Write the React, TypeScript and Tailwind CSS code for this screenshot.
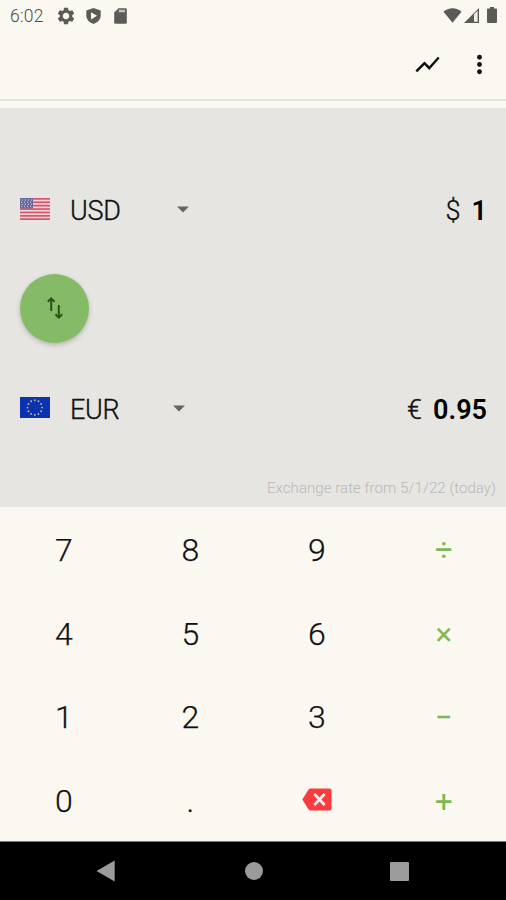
import type { ReactNode } from "react"

type Key = { label: string; content?: ReactNode; operator?: boolean }

function UsFlag() {
  return (
    <svg className="mb-px h-[22px] w-[30px]" viewBox="0 0 30 22">
      <rect width="30" height="22" fill="#f3d3d8" />
      {[0, 3.4, 6.8, 10.2, 13.6, 17, 20.3].map((y) => (
        <rect key={y} y={y} width="30" height="1.7" fill="#d4566b" />
      ))}
      <rect width="13" height="10.5" fill="#66699c" />
      {[2, 4.2, 6.4, 8.6].map((y, row) =>
        [2, 5, 8, 11].map((x) => (
          <circle key={`${x}-${y}`} cx={row % 2 ? x - 0.4 : x + 0.3} cy={y} r="0.65" fill="#c9cbe0" />
        )),
      )}
    </svg>
  )
}

function EuFlag() {
  return (
    <svg className="mb-px h-[21px] w-[30px]" viewBox="0 0 30 21">
      <rect width="30" height="21" fill="#0b32b0" />
      {Array.from({ length: 12 }, (_, i) => (
        <circle
          key={i}
          cx={14.8 + 7.3 * Math.sin((i * Math.PI) / 6)}
          cy={10.6 - 7.3 * Math.cos((i * Math.PI) / 6)}
          r="0.95"
          fill="#c3bd78"
        />
      ))}
    </svg>
  )
}

function StatusBar() {
  return (
    <div className="flex h-8 items-center justify-between pr-[8px] pl-[10px] text-[#5c5b58]">
      <div className="flex items-center">
        <span className="w-[46px] text-[17.5px] leading-8 font-light tracking-[0.2px] text-[#4d4c49]">6:02</span>
        <svg className="h-5 w-5" viewBox="0 0 24 24" fill="currentColor">
          <path d="M19.43 12.98c.04-.32.07-.64.07-.98s-.03-.66-.07-.98l2.11-1.65c.19-.15.24-.42.12-.64l-2-3.46c-.12-.22-.39-.3-.61-.22l-2.49 1c-.52-.4-1.08-.73-1.69-.98l-.38-2.65C14.46 2.18 14.25 2 14 2h-4c-.25 0-.46.18-.49.42l-.38 2.65c-.61.25-1.17.59-1.69.98l-2.49-1c-.23-.09-.49 0-.61.22l-2 3.46c-.13.22-.07.49.12.64l2.11 1.65c-.04.32-.07.65-.07.98s.03.66.07.98l-2.11 1.65c-.19.15-.24.42-.12.64l2 3.46c.12.22.39.3.61.22l2.49-1c.52.4 1.08.73 1.69.98l.38 2.65c.03.24.24.42.49.42h4c.25 0 .46-.18.49-.42l.38-2.65c.61-.25 1.17-.59 1.69-.98l2.49 1c.23.09.49 0 .61-.22l2-3.46c.12-.22.07-.49-.12-.64l-2.11-1.65zM12 15.9c-2.15 0-3.9-1.75-3.9-3.9s1.75-3.9 3.9-3.9 3.9 1.75 3.9 3.9-1.75 3.9-3.9 3.9z" />
        </svg>
        <svg className="ml-[10px] h-4 w-[15px]" viewBox="0 0 15 16">
          <path d="M7.5 0L14.7 2.6V7.6C14.7 11.5 11.7 14.7 7.5 16C3.3 14.7 .3 11.5 .3 7.6V2.6Z" fill="currentColor" />
          <path d="M5 4.2L11 7.8L5 11.4Z" fill="#fbf8f1" />
        </svg>
        <svg className="ml-[13px] h-4 w-[13px]" viewBox="0 0 13 16">
          <path d="M4.5 .3H11.5Q12.8 .3 12.8 1.6V14.4Q12.8 15.7 11.5 15.7H1.5Q.2 15.7 .2 14.4V4.6Z" fill="currentColor" />
          <path d="M5 1.8H11V4.3H4.6Z" fill="#c5c3be" />
        </svg>
      </div>
      <div className="flex items-center pb-[2px]">
        <svg className="h-[15px] w-[19px]" viewBox="0 0 19 15" fill="currentColor">
          <path d="M9.5 14.7L.5 3.7C3 1.5 6 .3 9.5 .3S16 1.5 18.5 3.7Z" />
        </svg>
        <svg className="ml-[2px] h-[15px] w-[15px]" viewBox="0 0 15 15">
          <path d="M0 15L15 0V15Z" fill="currentColor" />
          <path d="M10 6.2L13.6 2.8V13.7H10Z" fill="#f3f0e9" />
        </svg>
        <svg className="mr-px ml-[8px] h-4 w-[10px]" viewBox="0 0 10 16" fill="currentColor">
          <path d="M3 0H7V1.6H9Q10 1.6 10 2.6V15Q10 16 9 16H1Q0 16 0 15V2.6Q0 1.6 1 1.6H3Z" />
        </svg>
      </div>
    </div>
  )
}

function Toolbar() {
  return (
    <div className="flex h-[67px] items-center justify-end pr-[12px] pb-[3px] text-[#111]">
      <button className="mr-[23px]" aria-label="Chart">
        <svg className="h-[29px] w-[29px]" viewBox="0 0 24 24" fill="currentColor">
          <path d="M3.5 18.49l6-6.01 4 4L22 6.92l-1.41-1.41-7.09 7.97-4-4L2 16.99z" />
        </svg>
      </button>
      <button aria-label="More">
        <svg className="h-[29px] w-[29px]" viewBox="0 0 24 24" fill="currentColor">
          <circle cx="12" cy="6" r="2" />
          <circle cx="12" cy="12" r="2" />
          <circle cx="12" cy="18" r="2" />
        </svg>
      </button>
    </div>
  )
}

type CurrencyRowProps = {
  flag: ReactNode
  code: string
  symbol: string
  amount: string
  codeWidth: string
}

function CurrencyRow({ flag, code, symbol, amount, codeWidth }: CurrencyRowProps) {
  return (
    <div className="flex h-[60px] items-center pr-[19px] pl-5 text-[27px] text-[#111]">
      {flag}
      <span className={`ml-[20px] pt-[4px] font-light tracking-[-0.3px] [-webkit-text-stroke:0.35px] ${codeWidth}`}>
        {code}
      </span>
      <svg className="h-[7px] w-3" viewBox="0 0 12 7">
        <path d="M0 .5H12L6 6.5Z" fill="#666562" />
      </svg>
      <span className="ml-auto pt-[4px] font-light [-webkit-text-stroke:0.35px]">{symbol}</span>
      <span className="ml-[11px] pt-[4px] font-semibold text-black">{amount}</span>
    </div>
  )
}

const keys: Key[] = [
  { label: "7" },
  { label: "8" },
  { label: "9" },
  { label: "÷", operator: true },
  { label: "4" },
  { label: "5" },
  { label: "6" },
  { label: "×", operator: true },
  { label: "1" },
  { label: "2" },
  { label: "3" },
  { label: "−", operator: true },
  { label: "0" },
  { label: "." },
  {
    label: "Delete",
    content: (
      <svg className="mb-[3px] ml-px h-[23px] w-[30px]" viewBox="0 0 30 23">
        <path d="M8.5 .5H27.5Q29.5 .5 29.5 2.5V20.5Q29.5 22.5 27.5 22.5H8.5Q7.3 22.5 6.6 21.5L.3 11.5L6.6 1.5Q7.3 .5 8.5 .5Z" fill="#fb3b3e" />
        <path d="M12.3 6L22.7 17M22.7 6L12.3 17" stroke="#fff5ef" strokeWidth="2.6" />
      </svg>
    ),
  },
  { label: "+", operator: true },
]

function Keypad() {
  return (
    <div className="grid h-[334px] grid-cols-4 grid-rows-4">
      {keys.map((key) => (
        <button
          key={key.label}
          aria-label={key.label}
          className={
            key.operator
              ? "flex items-center justify-center pt-[5px] pl-[2px] text-[31px] text-[#7cb956]"
              : "flex items-center justify-center pt-[3px] pl-px text-[32px] font-light text-[#111] [-webkit-text-stroke:0.25px]"
          }
        >
          {key.content ?? key.label}
        </button>
      ))}
    </div>
  )
}

function NavigationBar() {
  return (
    <div className="flex h-[59px] items-center border-t border-[#777] bg-black pl-[96px]">
      <svg className="h-[22px] w-[19px]" viewBox="0 0 19 22">
        <path d="M.5 11L18.7 .5V21.5Z" fill="#9b9b9b" />
      </svg>
      <div className="ml-[130px] h-[18px] w-[18px] rounded-full bg-[#9b9b9b]" />
      <div className="ml-[127px] h-[19px] w-[19px] rounded-[1px] bg-[#9b9b9b]" />
    </div>
  )
}

export default function App() {
  return (
    <div className="flex h-[900px] w-[506px] flex-col overflow-hidden bg-[#fbf8f1] font-['Roboto',sans-serif]">
      <StatusBar />
      <Toolbar />
      <div className="h-[9px] border-t-2 border-[#e6e3dd]" />
      <main className="flex h-[399px] flex-col bg-[#e6e5e1] pt-[71px]">
        <CurrencyRow flag={<UsFlag />} code="USD" symbol="$" amount="1" codeWidth="w-[107px]" />
        <button
          aria-label="Swap currencies"
          className="my-[35px] ml-5 flex h-[69px] w-[69px] items-center justify-center rounded-full bg-[#85ba67] pb-px shadow-[0_2px_5px_rgba(0,0,0,0.22)]"
        >
          <svg className="h-[22px] w-4" viewBox="0 0 16 22" fill="none" stroke="#2d5218" strokeWidth="2">
            <path d="M4.2 14V1.5M.8 4.8L4.2 1.4L7.6 4.8M11.8 8V20.5M8.4 17.2L11.8 20.6L15.2 17.2" />
          </svg>
        </button>
        <CurrencyRow flag={<EuFlag />} code="EUR" symbol="€" amount="0.95" codeWidth="w-[103px]" />
        <p className="mt-auto pr-[10px] pb-[8px] text-right text-[15px] leading-[22px] font-light tracking-[0.06px] text-[#b9b8b5]">
          Exchange rate from 5/1/22 (today)
        </p>
      </main>
      <Keypad />
      <NavigationBar />
    </div>
  )
}
